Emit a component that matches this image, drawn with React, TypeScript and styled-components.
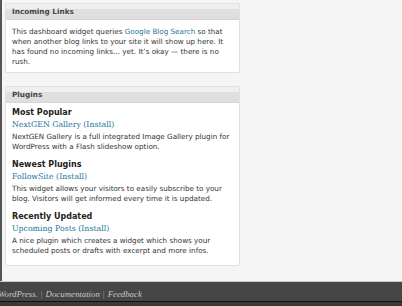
import React from 'react';
import styled, {createGlobalStyle} from 'styled-components';

const Global = createGlobalStyle`
  html, body {
    margin: 0;
    padding: 0;
    background: #f5f5f5;
  }
`;

const Screen = styled.div`
  width: 402px;
  height: 306px;
  display: flex;
  flex-direction: column;
  overflow: hidden;
  font-family: "DejaVu Sans", Verdana, sans-serif;
`;

const Main = styled.div`
  height: 281px;
  box-sizing: border-box;
  border-left: 2px solid #555;
  background: #f5f5f5;
  padding: 3px 0 0 3px;
  display: flex;
  flex-direction: column;
  gap: 13px;
`;

const Widget = styled.div`
  width: 235px;
  box-sizing: border-box;
  background: #fff;
  border: 1px solid #e0e0e0;
  border-radius: 2px;
`;

const WidgetHead = styled.div`
  height: 16px;
  box-sizing: border-box;
  display: flex;
  align-items: center;
  padding-left: 6px;
  background: linear-gradient(#efefef 0%, #efefef 35%, #e0e0e0 36%, #dedede 100%);
  border-bottom: 1px solid #d6d6d6;
  color: #464646;
  font-weight: bold;
  font-size: 7.3px;
`;

const WidgetBody = styled.div<{ $pad: string }>`
  padding: ${p => p.$pad};
  color: #333;
  font-size: 7.2px;
  line-height: 10px;
`;

const Link = styled.a`
  color: #21759b;
  text-decoration: none;
`;

const Section = styled.div`
  & + & {
    margin-top: 7px;
  }
`;

const SectionTitle = styled.div`
  font-size: 8px;
  font-weight: bold;
  line-height: 12px;
  color: #222;
`;

const PluginLine = styled.div`
  font-family: "DejaVu Serif", Georgia, serif;
  font-size: 7.8px;
  line-height: 12px;
  color: #21759b;
`;

const Desc = styled.div`
  margin-top: 1px;
`;

const Footer = styled.div`
  height: 21px;
  box-sizing: border-box;
  border-top: 1px solid #c8c8c8;
  border-bottom: 1px solid #111;
  background: #464646;
  display: flex;
  align-items: center;
  padding-top: 5px;
  font-family: "Liberation Serif", "Times New Roman", serif;
  font-style: italic;
  font-size: 8.8px;
  color: #c8c8c8;
`;

const FooterText = styled.span`
  margin-left: -2px;
  white-space: nowrap;
`;

const Sep = styled.span`
  font-style: normal;
  color: #999;
  margin: 0 3px;
`;

const Bottom = styled.div`
  flex: 1;
  background: #3a3a3a;
`;

const plugins = [
    {
        title: 'Most Popular',
        name: 'NextGEN Gallery',
        desc: 'NextGEN Gallery is a full integrated Image Gallery plugin for WordPress with a Flash slideshow option.'
    },
    {
        title: 'Newest Plugins',
        name: 'FollowSite',
        desc: 'This widget allows your visitors to easily subscribe to your blog. Visitors will get informed every time it is updated.'
    },
    {
        title: 'Recently Updated',
        name: 'Upcoming Posts',
        desc: 'A nice plugin which creates a widget which shows your scheduled posts or drafts with excerpt and more infos.'
    },
]

export default function App() {
    return (
        <Screen>
            <Global/>
            <Main>
                <Widget>
                    <WidgetHead>Incoming Links</WidgetHead>
                    <WidgetBody $pad="7px 6px 5px 6px">
                        This dashboard widget queries <Link href="#">Google Blog Search</Link> so that
                        when another blog links to your site it will show up here. It has found no
                        incoming links… yet. It’s okay — there is no rush.
                    </WidgetBody>
                </Widget>
                <Widget>
                    <WidgetHead>Plugins</WidgetHead>
                    <WidgetBody $pad="4px 6px 9px 6px">
                        {plugins.map(p => (
                            <Section key={p.title}>
                                <SectionTitle>{p.title}</SectionTitle>
                                <PluginLine>{p.name} (Install)</PluginLine>
                                <Desc>{p.desc}</Desc>
                            </Section>
                        ))}
                    </WidgetBody>
                </Widget>
            </Main>
            <Footer>
                <FooterText>
                    WordPress.<Sep>|</Sep>Documentation<Sep>|</Sep>Feedback
                </FooterText>
            </Footer>
            <Bottom/>
        </Screen>
    );
}
